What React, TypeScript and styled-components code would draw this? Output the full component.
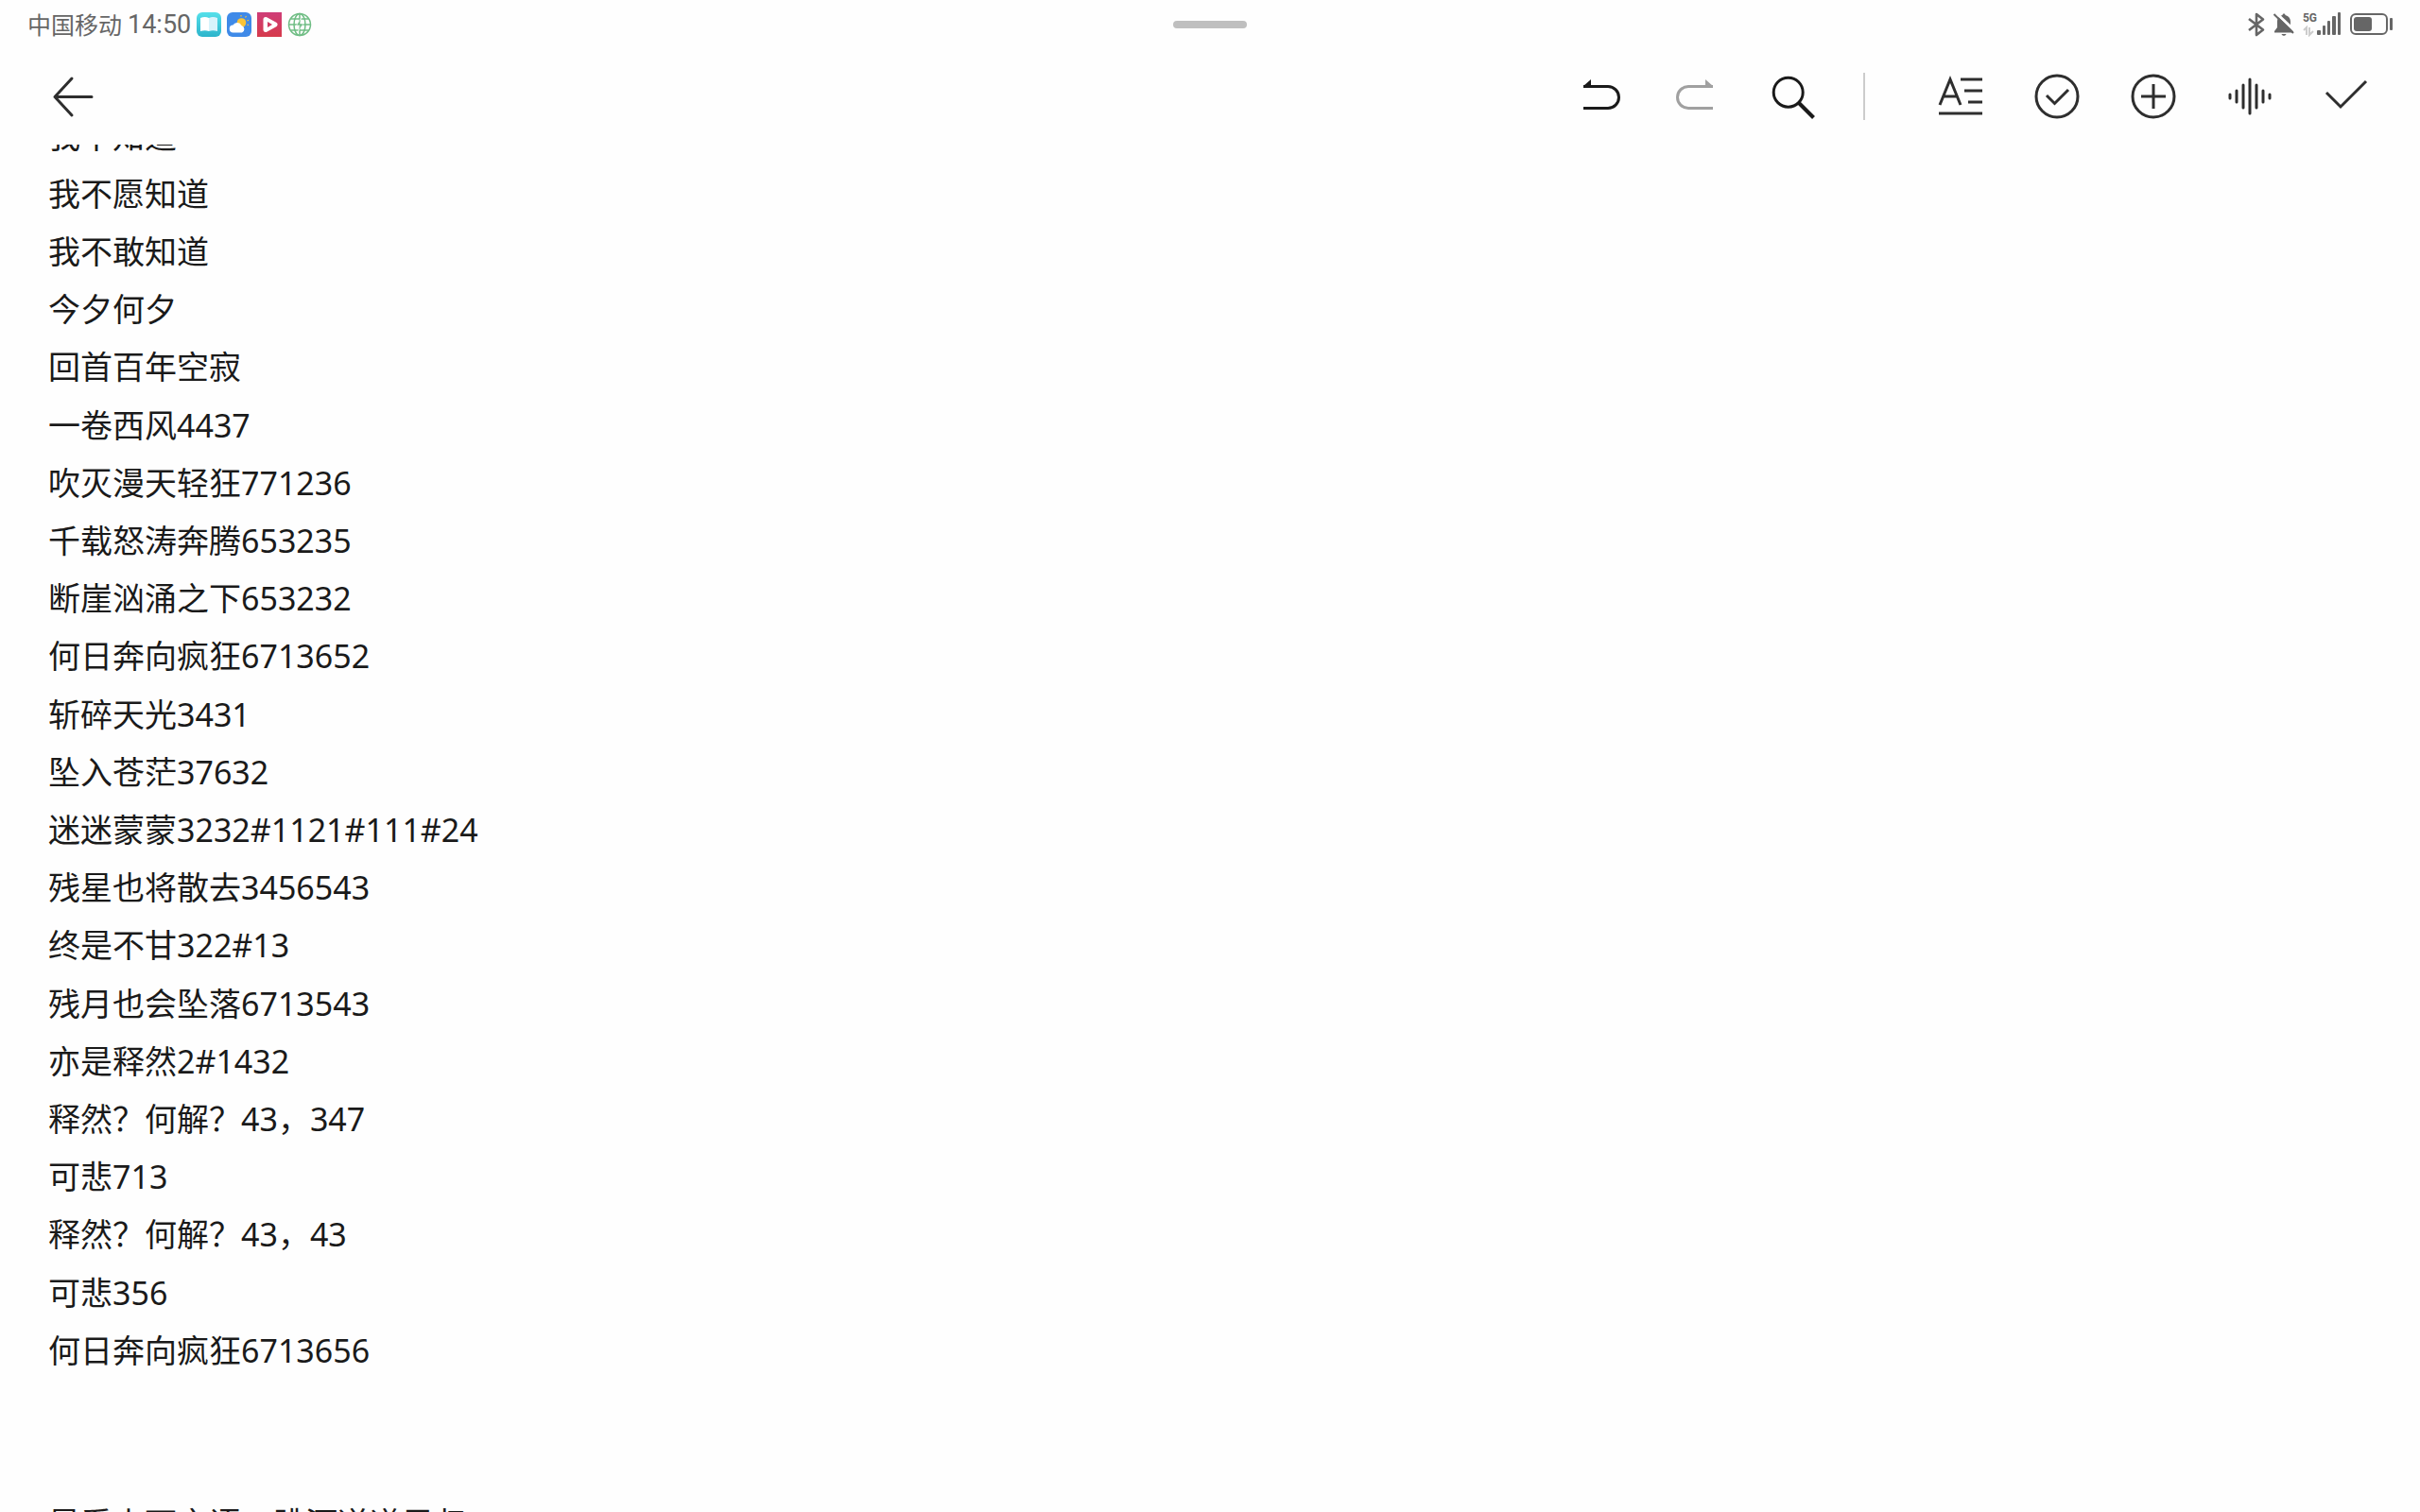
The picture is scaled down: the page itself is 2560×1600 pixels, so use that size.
import React from "react";
import styled, { createGlobalStyle } from "styled-components";

const GlobalStyle = createGlobalStyle`
  * { box-sizing: border-box; }
  body { margin: 0; background: #fefefe; font-family: "Noto Sans", "Noto Sans CJK SC", sans-serif; }
`;

const Screen = styled.div`
  display: flex;
  flex-direction: column;
  height: 100vh;
  overflow: hidden;
`;

const StatusBar = styled.header`
  display: grid;
  grid-template-columns: 1fr auto 1fr;
  align-items: center;
  height: 52px;
  padding: 0 29px;
  color: #666;
`;

const StatusGroup = styled.div<{ $end?: boolean; $gap: number }>`
  display: flex;
  align-items: center;
  justify-content: ${(p) => (p.$end ? "flex-end" : "flex-start")};
  gap: ${(p) => p.$gap}px;
  svg { display: block; }
`;

const Carrier = styled.span`
  font-size: 25px;
  line-height: 32px;
  white-space: nowrap;
`;

const Clock = styled.time`
  font-family: Roboto, sans-serif;
  font-size: 27px;
  line-height: 32px;
`;

const Handle = styled.div`
  width: 78px;
  height: 8px;
  border-radius: 4px;
  background: #bfbfbf;
`;

const Toolbar = styled.nav`
  display: flex;
  align-items: center;
  justify-content: space-between;
  flex: none;
  height: 101px;
  padding: 0 42px 1px;
`;

const Actions = styled.div`
  display: flex;
  align-items: center;
  gap: 30px;
`;

const IconButton = styled.button<{ $strong?: boolean }>`
  display: grid;
  place-items: center;
  width: 72px;
  height: 72px;
  padding: 0;
  border: 0;
  background: none;
  color: ${(p) => (p.$strong ? "#1a1a1a" : "#2e2e2e")};
  &:disabled { color: #a0a0a0; }
`;

const Divider = styled.span`
  width: 2px;
  height: 50px;
  margin: 0 35px 0 9px;
  background: #ccc;
`;

const Note = styled.main`
  flex: 1;
  min-height: 0;
  overflow: hidden;
  padding: 0 51px;
  outline: none;
`;

const Verses = styled.div`
  display: flex;
  flex-direction: column;
  gap: 1px;
  margin-top: -39px;
`;

const Verse = styled.div`
  color: #1a1a1a;
  font-size: 34px;
  line-height: 61px;
`;

const Line = styled.p`
  min-height: 61px;
  margin: 0;
`;

const verses = [
  ["我不知道", "我不愿知道", "我不敢知道", "今夕何夕", "回首百年空寂"],
  ["一卷西风4437", "吹灭漫天轻狂771236", "千载怒涛奔腾653235", "断崖汹涌之下653232", "何日奔向疯狂6713652"],
  ["斩碎天光3431", "坠入苍茫37632", "迷迷蒙蒙3232#1121#111#24", "残星也将散去3456543", "终是不甘322#13"],
  ["残月也会坠落6713543", "亦是释然2#1432", "释然？何解？43，347", "可悲713", "释然？何解？43，43"],
  ["可悲356", "何日奔向疯狂6713656", "", "", "是看山下言语，跳河逆道思归"],
];

const Icon = ({ children, w = 3 }: { children: React.ReactNode; w?: number }) => (
  <svg width="72" height="72" viewBox="0 0 72 72" fill="none" stroke="currentColor" strokeWidth={w} aria-hidden="true">
    {children}
  </svg>
);

const BookApp = () => (
  <svg width="26" height="26" viewBox="0 0 26 26" aria-hidden="true">
    <defs>
      <linearGradient id="book" x1="0" y1="0" x2="0" y2="1">
        <stop offset="0" stopColor="#55e0ea" />
        <stop offset="1" stopColor="#2cb4cb" />
      </linearGradient>
    </defs>
    <rect width="26" height="26" rx="6" fill="url(#book)" />
    <path d="M4 6Q9 4 13 6V20Q9 18.500 4 20Z" fill="#fff" />
    <path d="M22 6Q17 4 13 6V20Q17 18.500 22 20Z" fill="#d8f3fb" />
  </svg>
);

const WeatherApp = () => (
  <svg width="26" height="26" viewBox="0 0 26 26" aria-hidden="true">
    <rect width="26" height="26" rx="6" fill="#3f8ae8" />
    <circle cx="15.500" cy="11" r="4.800" fill="#fbc437" />
    <path d="M15 4.500V3M19.500 5.500L20.500 4M21.500 9L23 8.300M21.500 13L23 13.500" stroke="#fbc437" strokeWidth="1.200" />
    <path d="M7 21.500a4 4 0 0 1-.5-8 5 5 0 0 1 9 .5 4 4 0 0 1 .5 7.500Z" fill="#fff" />
  </svg>
);

const PlayerApp = () => (
  <svg width="26" height="26" viewBox="0 0 26 26" aria-hidden="true">
    <defs>
      <linearGradient id="player" x1="0" y1="0" x2="0" y2="1">
        <stop offset="0" stopColor="#cf3d78" />
        <stop offset="1" stopColor="#d63a4b" />
      </linearGradient>
    </defs>
    <rect width="26" height="26" fill="url(#player)" />
    <path d="M9 7.500L19 13L9 18.500Z" fill="#fff" stroke="#fff" strokeWidth="5" strokeLinejoin="round" />
    <path d="M11 10L16 13L11 16Z" fill="#d13b61" />
  </svg>
);

const GlobeApp = () => (
  <svg width="26" height="26" viewBox="0 0 26 26" fill="none" stroke="#6fbd84" strokeWidth="1.500" aria-hidden="true">
    <circle cx="13" cy="13" r="11.500" />
    <ellipse cx="13" cy="13" rx="6" ry="11.500" />
    <path d="M13 1.500V24.500M1.500 13H24.500M3.500 7H22.500M3.500 19H22.500" />
    <path d="M14.500 6L9.500 14H13L11.500 20L17 12H13.500Z" fill="#6fbd84" stroke="#fff" strokeWidth="0.600" />
  </svg>
);

const Bluetooth = () => (
  <svg width="18" height="26" viewBox="0 0 18 26" fill="none" stroke="#666" strokeWidth="2.600" aria-hidden="true">
    <path d="M1 7L16 18.500L9 24V2L16 7.500L1 19" strokeLinejoin="round" />
  </svg>
);

const Muted = () => (
  <svg width="24" height="26" viewBox="0 0 24 26" aria-hidden="true">
    <path d="M12 1.500c-.9 0-1.500.6-1.500 1.500-3.500.8-5.500 3.500-5.500 7V16L2 20v1.500H22V20L19 16V10c0-3.500-2-6.200-5.500-7 0-.9-.6-1.500-1.500-1.500Z" fill="#666" />
    <path d="M9.500 23h5c-.4 1.200-1.300 1.800-2.500 1.800s-2.100-.6-2.500-1.800Z" fill="#666" />
    <path d="M3 0L24.500 20.500" stroke="#fefefe" strokeWidth="3" />
    <path d="M1.500 2L22 22" stroke="#666" strokeWidth="2" />
  </svg>
);

const Network = styled.span`
  display: flex;
  align-items: stretch;
  height: 26px;
`;

const NetworkType = styled.span`
  display: flex;
  flex-direction: column;
  justify-content: space-between;
  font: 700 12px/12px Roboto, sans-serif;
`;

const Signal = () => (
  <Network>
    <NetworkType>
      5G
      <svg width="12" height="12" viewBox="0 0 12 12" fill="none" stroke="#ccc" strokeWidth="2" aria-hidden="true">
        <path d="M1 5L4 2V10M7 2V10L11 6" />
      </svg>
    </NetworkType>
    <svg width="26" height="26" viewBox="0 0 26 26" fill="#666" aria-hidden="true">
      <rect x="0" y="19" width="4" height="5" rx="1" />
      <rect x="6" y="14" width="3" height="10" rx="1" />
      <rect x="11" y="9" width="3" height="15" rx="1" />
      <rect x="16" y="4" width="4" height="20" rx="1" />
      <rect x="22" y="0" width="3" height="24" rx="1" />
    </svg>
  </Network>
);

const Battery = () => (
  <svg width="46" height="26" viewBox="0 0 46 26" aria-hidden="true">
    <rect x="2" y="2" width="38" height="21" rx="5" fill="none" stroke="#666" strokeWidth="2" />
    <rect x="5" y="5" width="19" height="15" rx="3" fill="#666" />
    <rect x="43" y="6" width="3" height="13" rx="1" fill="#666" />
  </svg>
);

export default function App() {
  return (
    <Screen>
      <GlobalStyle />
      <StatusBar>
        <StatusGroup $gap={6}>
          <Carrier>中国移动</Carrier>
          <Clock>14:50</Clock>
          <BookApp />
          <WeatherApp />
          <PlayerApp />
          <GlobeApp />
        </StatusGroup>
        <Handle />
        <StatusGroup $end $gap={8}>
          <Bluetooth />
          <Muted />
          <Signal />
          <Battery />
        </StatusGroup>
      </StatusBar>

      <Toolbar aria-label="笔记工具">
        <IconButton aria-label="返回">
          <Icon>
            <path d="M55 36.500H16M34 17L16 36.500L34 56" strokeLinecap="round" strokeLinejoin="round" />
          </Icon>
        </IconButton>
        <Actions>
          <IconButton $strong aria-label="撤销">
            <Icon>
              <path d="M19 25.500H45a11.500 11.500 0 0 1 0 23H19" />
              <path d="M19 27V25L27 18V27Z" fill="currentColor" stroke="none" />
            </Icon>
          </IconButton>
          <IconButton aria-label="重做" disabled>
            <Icon>
              <path d="M54 25.500H28a11.500 11.500 0 0 0 0 23H54" />
              <path d="M54 27V25L46 18V27Z" fill="currentColor" stroke="none" />
            </Icon>
          </IconButton>
          <IconButton $strong aria-label="搜索">
            <Icon>
              <circle cx="31.700" cy="31.700" r="15.500" />
              <path d="M42.500 42.500L58.500 58.500" strokeWidth="4" />
            </Icon>
          </IconButton>
          <Divider />
          <IconButton aria-label="文字样式">
            <Icon>
              <path d="M14 45L25 18L36 45M18 36H32M36 18H59M40 30H59M44 42H59M13 54H59" />
            </Icon>
          </IconButton>
          <IconButton aria-label="待办">
            <Icon>
              <circle cx="36" cy="36" r="22" />
              <path d="M25 35L33.500 43.500L48 29" />
            </Icon>
          </IconButton>
          <IconButton aria-label="插入">
            <Icon>
              <circle cx="36" cy="36" r="22" />
              <path d="M36 23V49M23 36H49" />
            </Icon>
          </IconButton>
          <IconButton aria-label="语音">
            <Icon>
              <path d="M15 34V38M22 30V42M29 24V48M36 18V54M43 24V48M50 30V42M57 34V38" strokeLinecap="round" />
            </Icon>
          </IconButton>
          <IconButton aria-label="完成">
            <Icon>
              <path d="M15 32L30 47L57 20" />
            </Icon>
          </IconButton>
        </Actions>
      </Toolbar>

      <Note contentEditable suppressContentEditableWarning spellCheck={false} aria-label="笔记正文">
        <Verses>
          {verses.map((lines, v) => (
            <Verse key={v}>
              {lines.map((text, i) => (
                <Line key={i}>{text}</Line>
              ))}
            </Verse>
          ))}
        </Verses>
      </Note>
    </Screen>
  );
}
